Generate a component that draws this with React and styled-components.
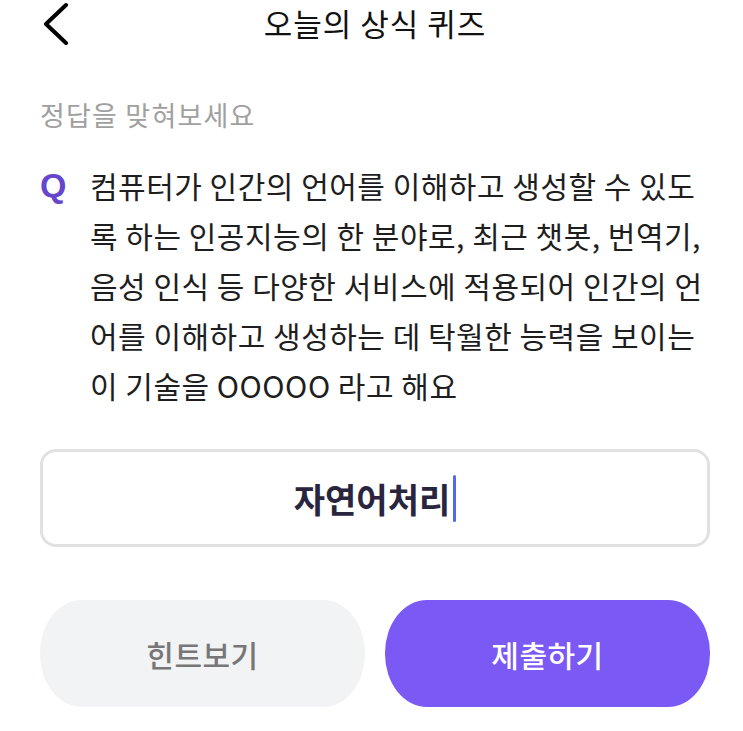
import React from "react";
import styled, { createGlobalStyle } from "styled-components";

const GlobalStyle = createGlobalStyle`
  body {
    margin: 0;
    background: #ffffff;
    font-family: "Noto Sans CJK KR", "Noto Sans", sans-serif;
    color: #222222;
  }
`;

const Page = styled.div`
  display: flex;
  flex-direction: column;
  padding: 0 33px 0 40px;
`;

const Header = styled.header`
  display: grid;
  grid-template-columns: 1fr auto 1fr;
  align-items: center;
  height: 45px;
`;

const BackButton = styled.button`
  justify-self: start;
  display: flex;
  padding: 0;
  border: none;
  background: none;
  cursor: pointer;
`;

const Title = styled.h1`
  margin: 0;
  font-size: 31px;
  font-weight: 400;
  letter-spacing: 1px;
  line-height: 45px;
  color: #111111;
`;

const Hint = styled.p`
  margin: 52px 0 0;
  font-size: 27px;
  letter-spacing: 1.2px;
  line-height: 36px;
  color: #a0a0a0;
`;

const Question = styled.div`
  display: flex;
  margin-top: 27px;
`;

const QMark = styled.span`
  flex: 0 0 50px;
  font-family: "Liberation Sans", Arial, sans-serif;
  font-size: 34px;
  font-weight: 700;
  line-height: 50px;
  color: #6646cc;
`;

const QText = styled.p`
  flex: 1;
  margin: 0;
  font-size: 30px;
  font-weight: 400;
  letter-spacing: 0.5px;
  line-height: 50px;
  color: #1e1e1e;
`;

const AnswerBox = styled.div`
  display: flex;
  align-items: center;
  justify-content: center;
  height: 92px;
  margin-top: 39px;
  border: 3px solid #e1e1e1;
  border-radius: 16px;
`;

const AnswerText = styled.span`
  font-size: 34px;
  font-weight: 700;
  color: #29253f;
`;

const Caret = styled.span`
  width: 3px;
  height: 47px;
  margin-left: 3px;
  border-radius: 2px;
  background: #4f6af0;
`;

const Actions = styled.div`
  display: grid;
  grid-template-columns: 1fr 1fr;
  gap: 20px;
  margin-top: 53px;
`;

const ActionButton = styled.button`
  height: 107px;
  border: none;
  border-radius: 42px / 53px;
  font-family: inherit;
  font-size: 30px;
  font-weight: 500;
  letter-spacing: 0.5px;
  background: ${(p) => (p.$primary ? "#7b59f5" : "#f2f3f5")};
  color: ${(p) => (p.$primary ? "#ffffff" : "#777777")};
  cursor: pointer;
`;

export default function App() {
  return (
    <>
      <GlobalStyle />
      <Page>
        <Header>
          <BackButton aria-label="뒤로">
            <svg width="28" height="45" viewBox="0 0 28 45" fill="none">
              <path
                d="M26 5 L6 24 L26 43"
                stroke="#000"
                strokeWidth="4"
                strokeLinecap="round"
                strokeLinejoin="round"
              />
            </svg>
          </BackButton>
          <Title>오늘의 상식 퀴즈</Title>
        </Header>
        <Hint>정답을 맞혀보세요</Hint>
        <Question>
          <QMark>Q</QMark>
          <QText>
            컴퓨터가 인간의 언어를 이해하고 생성할 수 있도록 하는 인공지능의 한 분야로, 최근 챗봇, 번역기, 음성 인식 등 다양한 서비스에 적용되어 인간의 언어를 이해하고 생성하는 데 탁월한 능력을 보이는 이 기술을 OOOOO 라고 해요
          </QText>
        </Question>
        <AnswerBox>
          <AnswerText>자연어처리</AnswerText>
          <Caret />
        </AnswerBox>
        <Actions>
          <ActionButton>힌트보기</ActionButton>
          <ActionButton $primary>제출하기</ActionButton>
        </Actions>
      </Page>
    </>
  );
}
